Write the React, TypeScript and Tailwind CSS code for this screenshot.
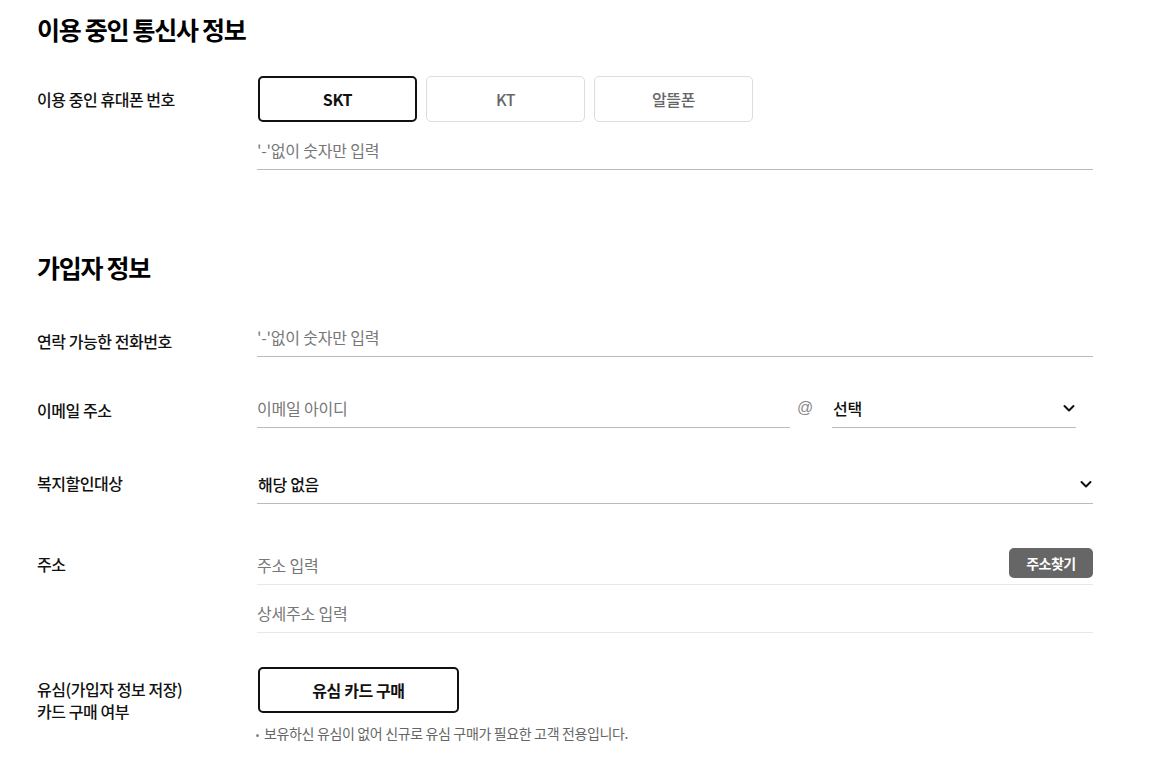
import React from 'react';

const font = { fontFamily: '"Noto Sans CJK KR", "Noto Sans", sans-serif' };

const Chevron = ({ className = '' }: { className?: string }) => (
  <svg viewBox="0 0 14 14" className={className} fill="none" stroke="#111" strokeWidth="2" strokeLinecap="round" strokeLinejoin="round">
    <path d="M2.5 5 L7 9.5 L11.5 5" />
  </svg>
);

const Label = ({ children, className = '' }: { children: React.ReactNode; className?: string }) => (
  <div className={`w-[220px] shrink-0 text-[16px] font-medium leading-[22px] tracking-[-0.45px] text-[#111] ${className}`}>{children}</div>
);

const TextInput = ({ placeholder, light = false }: { placeholder: string; light?: boolean }) => (
  <input
    placeholder={placeholder}
    className={`h-10 w-full border-b bg-transparent text-[16px] tracking-[-0.2px] text-[#111] outline-none placeholder:text-[#777] ${light ? 'border-[#e8e8e8]' : 'border-[#bbb]'}`}
    style={font}
  />
);

export default function App() {
  const carriers = ['SKT', 'KT', '알뜰폰'];
  return (
    <div className="min-h-screen bg-white pl-[37px] pr-[70px] pt-[13px]" style={font}>
      {/* 이용 중인 통신사 */}
      <h2 className="text-[25px] font-bold leading-8 tracking-[-1.3px] text-black">이용 중인 통신사 정보</h2>

      <div className="mt-[31px] flex">
        <Label className="pt-3">이용 중인 휴대폰 번호</Label>
        <div className="flex-1">
          <div className="flex gap-[9px] pl-px">
            {carriers.map((c, i) => (
              <button
                key={c}
                className={`h-[46px] w-[159px] rounded-[5px] text-[16px] tracking-[-0.4px] ${
                  i === 0 ? 'border-2 border-[#111] font-bold text-[#111]' : 'border border-[#ddd] font-medium text-[#666]'
                }`}
              >
                {c}
              </button>
            ))}
          </div>
          <div className="mt-2">
            <TextInput placeholder="'-'없이 숫자만 입력" />
          </div>
        </div>
      </div>

      {/* 가입자 정보 */}
      <h2 className="mt-[81px] text-[25px] font-bold leading-8 tracking-[-1.3px] text-black">가입자 정보</h2>

      <div className="mt-[34px] flex">
        <Label className="pt-[13px]">연락 가능한 전화번호</Label>
        <TextInput placeholder="'-'없이 숫자만 입력" />
      </div>

      <div className="mt-[31px] flex">
        <Label className="pt-[11px]">이메일 주소</Label>
        <div className="flex flex-1 items-center">
          <div className="w-[533px] shrink-0">
            <TextInput placeholder="이메일 아이디" />
          </div>
          <span className="w-[42px] shrink-0 pl-[7px] text-[16px] text-[#888]" style={{ fontFamily: '"Liberation Sans", sans-serif' }}>@</span>
          <div className="flex h-10 w-[244px] items-center justify-between border-b border-[#bbb] pl-px">
            <span className="text-[16px] font-medium tracking-[-0.3px] text-[#111]">선택</span>
            <Chevron className="h-[14px] w-[14px]" />
          </div>
        </div>
      </div>

      <div className="mt-9 flex">
        <Label className="pt-2">복지할인대상</Label>
        <div className="flex h-10 flex-1 items-center justify-between border-b border-[#bbb] pl-px">
          <span className="text-[16px] font-medium tracking-[-0.3px] text-[#111]">해당 없음</span>
          <Chevron className="h-[14px] w-[14px]" />
        </div>
      </div>

      <div className="mt-[41px] flex">
        <Label className="pt-2">주소</Label>
        <div className="flex-1">
          <div className="relative">
            <TextInput placeholder="주소 입력" light />
            <button className="absolute right-0 top-[3px] h-[30px] w-[84px] rounded-[5px] bg-[#666] text-[14px] font-bold tracking-[-0.5px] text-white">
              주소찾기
            </button>
          </div>
          <div className="mt-2">
            <TextInput placeholder="상세주소 입력" light />
          </div>
        </div>
      </div>

      <div className="mt-[34px] flex">
        <Label className="pt-[11px] leading-6">
          유심(가입자 정보 저장)
          <br />
          카드 구매 여부
        </Label>
        <div className="flex-1">
          <button className="ml-px h-[46px] w-[201px] rounded-[5px] border-2 border-[#111] text-[16px] font-bold tracking-[-0.4px] text-[#111]">
            유심 카드 구매
          </button>
          <p className="mt-[10px] flex items-center text-[14px] tracking-[-0.35px] text-[#666]">
            <span className="-ml-px mr-[5px] inline-block h-[3px] w-[3px] translate-y-[2px] rounded-full bg-[#888]" />
            보유하신 유심이 없어 신규로 유심 구매가 필요한 고객 전용입니다.
          </p>
        </div>
      </div>
    </div>
  );
}
